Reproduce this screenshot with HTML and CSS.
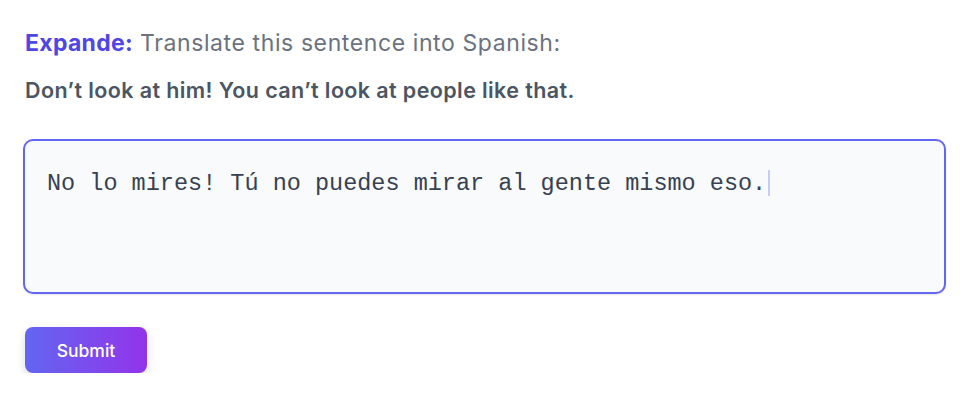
FILE: index.html
```html
<!DOCTYPE html>
<html>
<head>
<meta charset="utf-8">
<link rel="stylesheet" href="styles.css">
</head>
<body>
<div class="page">
  <h2 class="title"><span class="brand">Expande:</span> Translate this sentence into Spanish:</h2>
  <p class="sentence">Don’t look at him! You can’t look at people like that.</p>
  <div class="answer">No lo mires! Tú no puedes mirar al gente mismo eso.<span class="caret"></span></div>
  <button class="submit">Submit</button>
</div>
</body>
</html>
```
FILE: styles.css
```css
html, body {
  margin: 0;
  padding: 0;
  background: #ffffff;
}
.page {
  padding: 28px 22px 0 25px;
  font-family: Inter, "Noto Sans", sans-serif;
  display: flex;
  flex-direction: column;
  align-items: flex-start;
}
.title {
  margin: 0;
  font-size: 23px;
  font-weight: 400;
  line-height: 30px;
  color: #6b7280;
  letter-spacing: 0.6px;
}
.brand {
  color: #4f46e5;
  font-weight: 700;
  letter-spacing: 0.3px;
}
.sentence {
  margin: 18px 0 0 0;
  font-size: 21.5px;
  font-weight: 600;
  line-height: 28px;
  color: #4b5563;
  letter-spacing: 0.4px;
}
.answer {
  margin: 35px 0 0 -2px;
  box-sizing: border-box;
  width: 923px;
  height: 155px;
  border: 2px solid #6366f1;
  border-radius: 10px;
  background: #f8fafc;
  padding: 29px 22px;
  font-family: "Liberation Mono", "Courier New", monospace;
  font-size: 23.5px;
  line-height: 28px;
  color: #374151;
  box-shadow: 0 1px 2px rgba(0,0,0,0.1);
}
.caret {
  display: inline-block;
  width: 2px;
  height: 26px;
  background: #c7c9f7;
  vertical-align: -6px;
  margin-left: 2px;
}
.submit {
  margin-top: 33px;
  width: 122px;
  height: 46px;
  border: none;
  border-radius: 8px;
  background: linear-gradient(90deg, #6366f1, #9333ea);
  color: #ffffff;
  font-family: Inter, "Noto Sans", sans-serif;
  font-size: 17.5px;
  font-weight: 500;
  box-shadow: 0 4px 10px rgba(0,0,0,0.15);
}
```
